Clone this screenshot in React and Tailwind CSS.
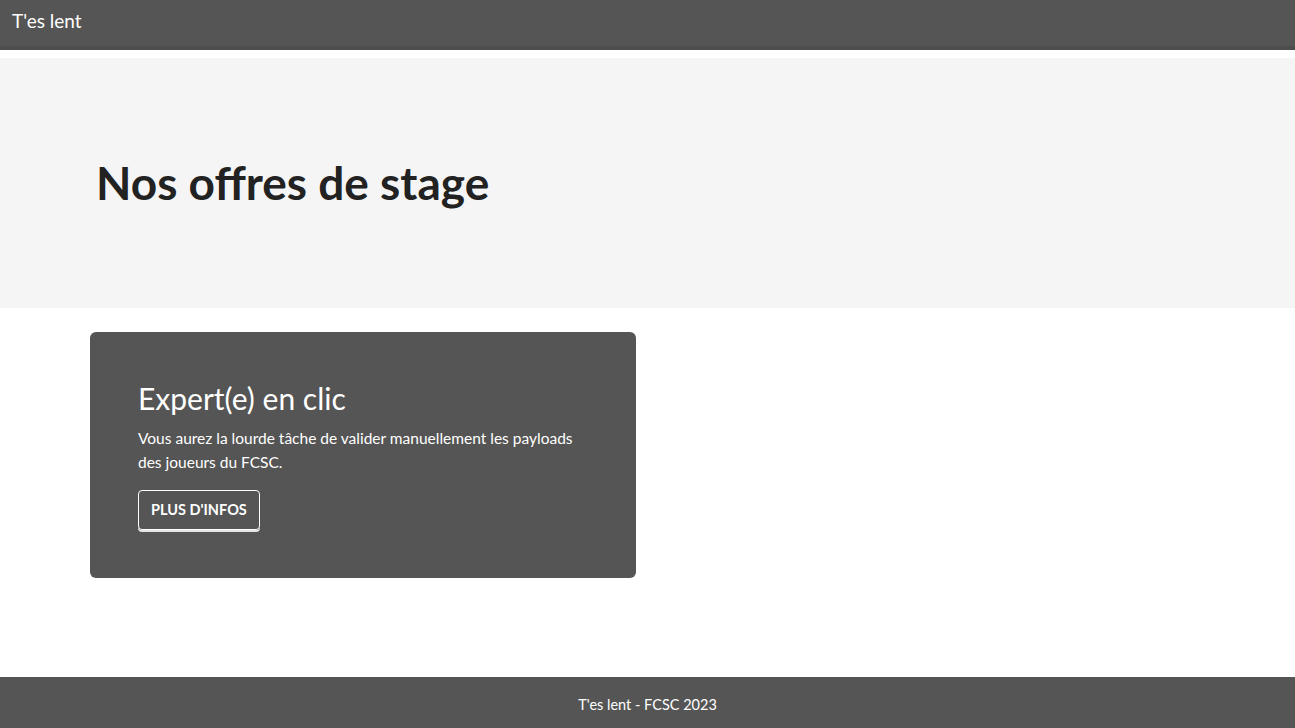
import React from "react";

function App() {
  return (
    <div className="min-h-screen flex flex-col bg-white font-['Lato','Liberation_Sans',sans-serif] text-[#4a4a4a]">
      <nav className="h-[50px] bg-[#555555] border-b-4 border-[#4d4d4d] flex items-center px-3">
        <span className="text-white text-[19px] -mt-1">T'es lent</span>
      </nav>
      <section className="mt-2 bg-[#f5f5f5] h-[250px] flex items-center px-24">
        <h1 className="text-[#222] text-[46px] font-bold leading-none">Nos offres de stage</h1>
      </section>
      <main className="flex-1 px-[90px] pt-6">
        <div className="w-[546px] h-[246px] bg-[#555555] rounded-md px-12 pt-12">
          <h2 className="text-white text-[30px] leading-[1.2] font-normal">Expert(e) en clic</h2>
          <p className="text-white text-[15.5px] leading-6 mt-[10px]">
            Vous aurez la lourde tâche de valider manuellement les payloads des joueurs du FCSC.
          </p>
          <button className="mt-4 h-10 px-3 border border-white rounded text-white text-[14.5px] font-bold uppercase shadow-[0_2px_0_#e5e5e5]">
            Plus d'infos
          </button>
        </div>
      </main>
      <footer className="h-[51px] bg-[#555555] flex items-center justify-center">
        <span className="text-white text-[14.5px] mt-1">T'es lent - FCSC 2023</span>
      </footer>
    </div>
  );
}

export default App;
